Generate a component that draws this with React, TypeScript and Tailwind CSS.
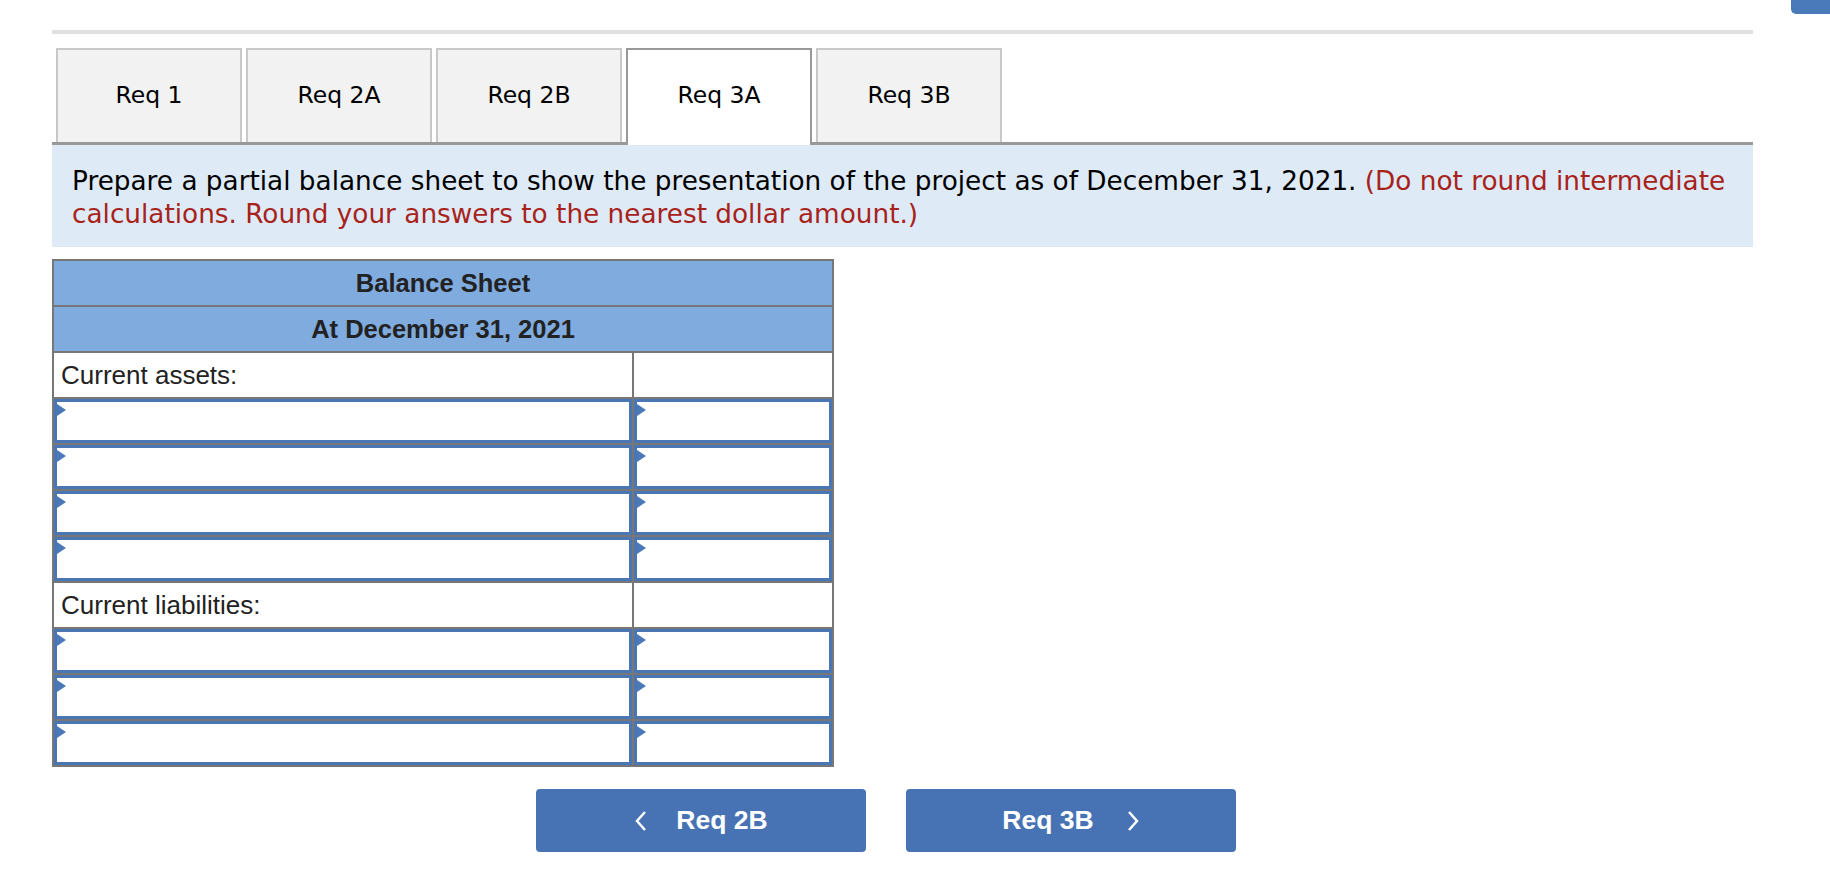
import React from "react";

const tabs = ["Req 1", "Req 2A", "Req 2B", "Req 3A", "Req 3B"];

function Tri() {
  return (
    <svg className="absolute left-0 top-[2px]" width="9" height="12" viewBox="0 0 9 12">
      <polygon points="0,0 9,6 0,12" fill="#4a78b8" />
    </svg>
  );
}

function InputCell({ last }: { last?: boolean }) {
  return (
    <td className={`border-2 border-[#777] p-0 h-[46px] ${last ? "w-[200px]" : ""}`}>
      <div className="relative h-full w-full border-[3px] border-[#4a76b4] bg-white">
        <Tri />
      </div>
    </td>
  );
}

function LabelRow({ label }: { label: string }) {
  return (
    <tr>
      <td className="border-2 border-[#777] h-[46px] px-[7px] text-[26px] leading-[28px] text-[#222] bg-white">{label}</td>
      <td className="border-2 border-[#777] h-[46px] bg-white"></td>
    </tr>
  );
}

function InputRow() {
  return (
    <tr>
      <InputCell />
      <InputCell last />
    </tr>
  );
}

export default function App() {
  return (
    <div className="relative w-[1830px] h-[876px] bg-white overflow-hidden" style={{ fontFamily: "'DejaVu Sans', sans-serif" }}>
      <div className="absolute right-0 top-0 w-[39px] h-[14px] bg-[#4a7ab9] rounded-bl-[5px]" />
      <div className="pl-[52px] pt-[30px] w-[1753px]">
        <div className="h-[4px] bg-[#e0e0e0]" />
        <div className="flex gap-[4px] pl-[4px] mt-[14px] h-[94px] items-end">
          {tabs.map((t) => {
            const active = t === "Req 3A";
            return (
              <div
                key={t}
                className={`w-[186px] h-[94px] flex items-center justify-center text-[23.5px] text-black ${
                  active
                    ? "bg-white border-2 border-b-0 border-[#999] relative z-10 -mb-[3px] h-[97px] pb-[3px]"
                    : "bg-[#f2f2f2] border-2 border-b-0 border-[#c8c8c8]"
                }`}
              >
                {t}
              </div>
            );
          })}
        </div>
        <div className="border-t-[3px] border-[#999] bg-[#deebf7] px-[20px] pt-[20px] pb-[16px] text-[26.3px] leading-[33px] text-black">
          Prepare a partial balance sheet to show the presentation of the project as of December 31, 2021.{" "}
          <span className="text-[#a8221c]">
            (Do not round intermediate calculations. Round your answers to the nearest dollar amount.)
          </span>
        </div>
        <table
          className="mt-[12px] border-collapse border-2 border-[#777] w-[782px]"
          style={{ fontFamily: "'Liberation Sans', Arial, sans-serif" }}
        >
          <tbody>
            <tr>
              <td colSpan={2} className="border-2 border-[#777] h-[46px] bg-[#80abdf] text-center font-bold text-[25.5px] leading-[28px] text-[#222]">
                Balance Sheet
              </td>
            </tr>
            <tr>
              <td colSpan={2} className="border-2 border-[#777] h-[46px] bg-[#80abdf] text-center font-bold text-[25.5px] leading-[28px] text-[#222]">
                At December 31, 2021
              </td>
            </tr>
            <LabelRow label="Current assets:" />
            <InputRow />
            <InputRow />
            <InputRow />
            <InputRow />
            <LabelRow label="Current liabilities:" />
            <InputRow />
            <InputRow />
            <InputRow />
          </tbody>
        </table>
        <div className="flex gap-[40px] ml-[484px] mt-[22px]" style={{ fontFamily: "'Liberation Sans', Arial, sans-serif" }}>
          <button className="w-[330px] h-[63px] rounded-[4px] bg-[#4773b4] text-white font-bold text-[26.5px] flex items-center justify-center gap-[28px]">
            <svg width="14" height="24" viewBox="0 0 14 24" fill="none" stroke="white" strokeWidth="2.5">
              <polyline points="11,3 3,12 11,21" />
            </svg>
            <span>Req 2B</span>
          </button>
          <button className="w-[330px] h-[63px] rounded-[4px] bg-[#4773b4] text-white font-bold text-[26.5px] flex items-center justify-center gap-[32px]">
            <span>Req 3B</span>
            <svg width="14" height="24" viewBox="0 0 14 24" fill="none" stroke="white" strokeWidth="2.5">
              <polyline points="3,3 11,12 3,21" />
            </svg>
          </button>
        </div>
      </div>
    </div>
  );
}
